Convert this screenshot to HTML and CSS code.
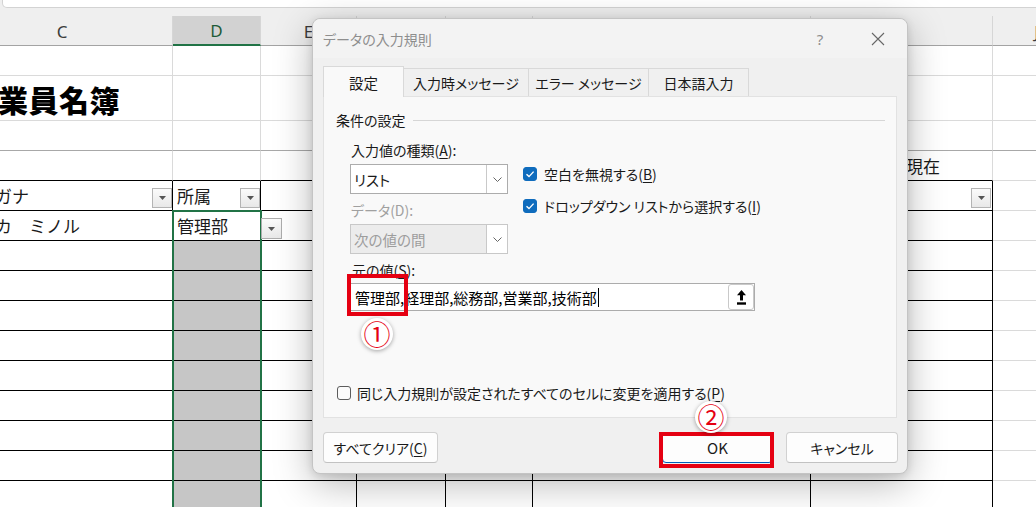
FILE: index.html
```html
<!DOCTYPE html>
<html lang="ja">
<head>
<meta charset="utf-8">
<title>データの入力規則</title>
<link rel="stylesheet" href="styles.css">
</head>
<body>
<div class="app">
  <div class="topstrip"><div class="formula"></div></div>
  <div class="sheet">
    <div class="ch chc">C</div><div class="ch sel">D</div><div class="ch">E</div><div class="ch">F</div><div class="ch">G</div><div class="ch">H</div><div class="ch">I</div><div class="ch chj">J</div>

    <div class="c"></div><div class="c"></div><div class="c"></div><div class="c"></div><div class="c"></div><div class="c"></div><div class="c"></div><div class="c"></div>

    <div class="c"><span class="title">業員名簿</span></div><div class="c"></div><div class="c"></div><div class="c"></div><div class="c"></div><div class="c"></div><div class="c"></div><div class="c"></div>

    <div class="c fz"></div><div class="c fz"></div><div class="c fz"></div><div class="c fz"></div><div class="c fz"></div><div class="c fz"></div><div class="c fz"></div><div class="c fz"></div>

    <div class="c tb"></div><div class="c tb"></div><div class="c tb"></div><div class="c tb"></div><div class="c tb"></div><div class="c tb"></div><div class="c tb date"><span>現在</span></div><div class="c"></div>

    <div class="c t hd"><span class="txt kana">フリガナ</span><span class="flt fc"><svg width="7" height="4" viewBox="0 0 7 4"><path d="M0 0H7L3.5 4Z" fill="#555"/></svg></span></div>
    <div class="c t hd"><span class="txt pad">所属</span><span class="flt fd"><svg width="7" height="4" viewBox="0 0 7 4"><path d="M0 0H7L3.5 4Z" fill="#555"/></svg></span></div>
    <div class="c t"></div><div class="c t"></div><div class="c t"></div><div class="c t"></div>
    <div class="c t hd end"><span class="flt fi"><svg width="7" height="4" viewBox="0 0 7 4"><path d="M0 0H7L3.5 4Z" fill="#555"/></svg></span></div>
    <div class="c"></div>

    <div class="c t"><span class="txt name">カ　ミノル</span></div><div class="c t"><span class="txt pad">管理部</span></div><div class="c t"></div><div class="c t"></div><div class="c t"></div><div class="c t"></div><div class="c t"></div><div class="c"></div>

    <div class="c t"></div><div class="c t g"></div><div class="c t"></div><div class="c t"></div><div class="c t"></div><div class="c t"></div><div class="c t"></div><div class="c"></div>
    <div class="c t"></div><div class="c t g"></div><div class="c t"></div><div class="c t"></div><div class="c t"></div><div class="c t"></div><div class="c t"></div><div class="c"></div>
    <div class="c t"></div><div class="c t g"></div><div class="c t"></div><div class="c t"></div><div class="c t"></div><div class="c t"></div><div class="c t"></div><div class="c"></div>
    <div class="c t"></div><div class="c t g"></div><div class="c t"></div><div class="c t"></div><div class="c t"></div><div class="c t"></div><div class="c t"></div><div class="c"></div>
    <div class="c t"></div><div class="c t g"></div><div class="c t"></div><div class="c t"></div><div class="c t"></div><div class="c t"></div><div class="c t"></div><div class="c"></div>
    <div class="c t"></div><div class="c t g"></div><div class="c t"></div><div class="c t"></div><div class="c t"></div><div class="c t"></div><div class="c t"></div><div class="c"></div>
    <div class="c t"></div><div class="c t g"></div><div class="c t"></div><div class="c t"></div><div class="c t"></div><div class="c t"></div><div class="c t"></div><div class="c"></div>
    <div class="c t"></div><div class="c t g"></div><div class="c t"></div><div class="c t"></div><div class="c t"></div><div class="c t"></div><div class="c t"></div><div class="c"></div>
    <div class="c t"></div><div class="c t g"></div><div class="c t"></div><div class="c t"></div><div class="c t"></div><div class="c t"></div><div class="c t"></div><div class="c"></div>
  </div>

  <div class="selection"></div>
  <div class="dvbtn"><svg width="7" height="4" viewBox="0 0 7 4"><path d="M0 0H7L3.5 4Z" fill="#555"/></svg></div>

  <div class="dialog">
    <div class="titlebar">
      <span class="dtitle">データの入力規則</span>
      <span class="help">?</span>
      <span class="close"><svg width="14" height="14" viewBox="0 0 14 14"><path d="M1 1L13 13M13 1L1 13" stroke="#666" stroke-width="1.1" fill="none"/></svg></span>
    </div>
    <div class="tabs">
      <div class="tab active w1">設定</div>
      <div class="tab w2">入力時メッセージ</div>
      <div class="tab w3">エラー メッセージ</div>
      <div class="tab w4">日本語入力</div>
    </div>
    <div class="panel">
      <div class="group"><span class="glabel">条件の設定</span><span class="gline"></span></div>
      <div class="cols">
        <div class="leftcol">
          <div class="lbl l1">入力値の種類(<u>A</u>):</div>
          <div class="combo"><span class="cv">リスト</span><span class="cbtn"><svg width="9" height="5" viewBox="0 0 9 5"><path d="M0.5 0.5L4.5 4.5L8.5 0.5" stroke="#666" stroke-width="1" fill="none"/></svg></span></div>
          <div class="lbl l2 dis">データ(D):</div>
          <div class="combo off"><span class="cv">次の値の間</span><span class="cbtn"><svg width="9" height="5" viewBox="0 0 9 5"><path d="M0.5 0.5L4.5 4.5L8.5 0.5" stroke="#666" stroke-width="1" fill="none"/></svg></span></div>
        </div>
        <div class="checks">
          <div class="chk c1"><span class="box on"><svg width="14" height="14" viewBox="0 0 14 14"><path d="M3.5 7.2L6 9.6L10.6 4.6" stroke="#fff" stroke-width="1.4" fill="none"/></svg></span><span>空白を無視する(<u>B</u>)</span></div>
          <div class="chk c2"><span class="box on"><svg width="14" height="14" viewBox="0 0 14 14"><path d="M3.5 7.2L6 9.6L10.6 4.6" stroke="#fff" stroke-width="1.4" fill="none"/></svg></span><span>ドロップダウン リストから選択する(<u>I</u>)</span></div>
        </div>
      </div>
      <div class="lbl l3">元の値(<u>S</u>):</div>
      <div class="srcinput">
        <span class="val">管理部,経理部,総務部,営業部,技術部</span><span class="caret"></span>
        <span class="collapse"><svg width="9" height="15" viewBox="0 0 9 15"><path d="M4.5 0L9 5.2H6V10.5H3V5.2H0Z" fill="#000"/><rect x="0" y="12.3" width="9" height="2.4" fill="#000"/></svg></span>
      </div>
      <div class="chk apply"><span class="box"></span><span>同じ入力規則が設定されたすべてのセルに変更を適用する(<u>P</u>)</span></div>
    </div>
    <div class="btnrow">
      <button class="btn clear">すべてクリア(<u>C</u>)</button>
      <button class="btn ok">OK</button>
      <button class="btn cancel">キャンセル</button>
    </div>
  </div>

  <div class="mark m1"></div>
  <div class="num n1">①</div>
  <div class="mark m2"></div>
  <div class="num n2">②</div>
</div>
</body>
</html>
```

FILE: styles.css
```css
* { box-sizing: border-box; }
html, body { margin: 0; padding: 0; }
body {
  width: 1036px;
  height: 507px;
  overflow: hidden;
  background: #fff;
  font-family: "Noto Sans CJK JP", "Noto Sans", sans-serif;
  color: #1a1a1a;
}
.app { position: relative; width: 1036px; height: 507px; overflow: hidden; }

/* top formula strip */
.topstrip { height: 16px; background: #efefef; padding-left: 2px; overflow: hidden; }
.formula {
  height: 8px;
  margin-right: -20px;
  background: #fff;
  border: 1px solid #d3d3d3;
  border-top: none;
  border-radius: 0 0 5px 5px;
}

/* sheet grid */
.sheet {
  display: grid;
  grid-template-columns: 173px 88px 96px 89px 87px 278px 182px 100px;
  grid-template-rows: 30px 30px 45px 30px 30px repeat(11, 30px);
}
.ch {
  background: #efefef;
  border-right: 1px solid #d6d6d6;
  border-bottom: 1px solid #a3a3a3;
  display: flex;
  align-items: center;
  justify-content: center;
  font-family: "Noto Sans", sans-serif;
  font-size: 17px;
  color: #3c3c3c;
  padding-top: 1px;
}
.ch.chc { padding-right: 48px; }
.ch.chj { padding-right: 12px; }
.ch.sel { background: #d2d2d2; border-bottom: 2px solid #217346; color: #1d5b37; }

.c {
  border-right: 1px solid #dadada;
  border-bottom: 1px solid #dadada;
  display: flex;
  align-items: center;
  font-size: 17px;
  white-space: nowrap;
  min-width: 0;
  color: #1a1a1a;
}
.c.fz { border-bottom-color: #a8a8a8; }
.c.tb { border-bottom-color: #000; }
.c.t { border-right-color: #000; border-bottom-color: #000; }
.c.g { background: #c6c6c6; }
.c.hd { justify-content: space-between; }
.c.end { justify-content: flex-end; }
.c.date { justify-content: flex-end; padding-right: 52px; }

.title { font-size: 30px; font-weight: 900; margin-left: -2px; color: #000; padding-top: 1px; letter-spacing: 0.5px; }
.txt.kana { margin-left: -39px; }
.txt.name { margin-left: -5px; }
.txt.pad { padding-left: 4px; }

.flt {
  width: 20px;
  height: 20px;
  border: 1px solid #b4b4b4;
  background: linear-gradient(#fbfbfb, #e8e8e8);
  display: flex;
  align-items: center;
  justify-content: center;
  margin-top: 4px;
  padding-top: 1px;
}
.flt.fi { margin-right: 1px; }

/* overlays on sheet */
.selection {
  position: absolute;
  left: 172px;
  top: 210px;
  width: 90px;
  height: 310px;
  border: 2px solid #217346;
  pointer-events: none;
}
.dvbtn {
  position: absolute;
  left: 261px;
  top: 218px;
  width: 21px;
  height: 21px;
  border: 1px solid #adadad;
  background: linear-gradient(#fbfbfb, #e8e8e8);
  display: flex;
  align-items: center;
  justify-content: center;
  padding-top: 1px;
}

/* dialog */
.dialog {
  position: absolute;
  left: 312px;
  top: 18px;
  width: 596px;
  height: 456px;
  background: #f0f0f0;
  border: 1px solid #c4c4c4;
  border-radius: 8px;
  box-shadow: 0 10px 38px rgba(0, 0, 0, 0.28), 0 2px 8px rgba(0, 0, 0, 0.12);
  font-feature-settings: "palt" 1;
  font-size: 14px;
  display: flex;
  flex-direction: column;
}
.titlebar {
  height: 39px;
  display: flex;
  align-items: center;
  padding-left: 10px;
  padding-right: 6px;
  background: #f3f3f3;
  border-radius: 8px 8px 0 0;
}
.dtitle { color: #8e8e8e; font-size: 14px; flex: 1; }
.help {
  width: 46px;
  text-align: center;
  color: #8e8e8e;
  font-family: "Noto Sans", sans-serif;
  font-size: 15px;
  margin-right: 12px;
}
.close { width: 46px; display: flex; justify-content: center; align-items: center; }

.tabs {
  height: 38px;
  display: flex;
  align-items: flex-end;
  padding-left: 10px;
}
.tab {
  height: 28px;
  border-top: 1px solid #d9d9d9;
  border-right: 1px solid #d9d9d9;
  background: #f0f0f0;
  display: flex;
  align-items: center;
  justify-content: center;
  color: #1a1a1a;
  font-size: 14px;
  padding-top: 1px;
}
.tab.active {
  height: 31px;
  margin-bottom: -1px;
  background: #f9f9f9;
  border-left: 1px solid #d9d9d9;
  position: relative;
  z-index: 1;
  padding-top: 0;
  font-size: 14.5px;
}
.w1 { width: 81px; }
.w2 { width: 125px; }
.w3 { width: 120px; }
.w4 { width: 100px; }

.panel {
  margin: 0 10px 0 10px;
  height: 322px;
  background: #f9f9f9;
  border: 1px solid #e2e2e2;
  display: flex;
  flex-direction: column;
}
.group {
  margin-top: 13px;
  height: 20px;
  display: flex;
  align-items: center;
  padding-left: 12px;
  padding-right: 11px;
}
.glabel { font-size: 14px; }
.gline { flex: 1; height: 1px; background: #d6d6d6; margin-left: 7px; }

.cols { display: flex; }
.leftcol { padding-left: 26px; width: 184px; }
.lbl { height: 20px; display: flex; align-items: center; padding-left: 1px; font-size: 14px; }
.lbl u, .chk u, .btn u { text-underline-offset: 2px; }
.lbl.l1 { margin-top: 10px; }
.lbl.l2 { margin-top: 6px; }
.lbl.dis { color: #a0a0a0; }
.combo {
  margin-top: 4px;
  width: 158px;
  height: 30px;
  border: 1px solid #acacac;
  background: #fff;
  display: flex;
}
.cv { flex: 1; display: flex; align-items: center; padding-left: 3px; font-size: 14.5px; }
.cbtn {
  width: 21px;
  border-left: 1px solid #c9c9c9;
  display: flex;
  align-items: center;
  justify-content: center;
  background: #fff;
}
.combo.off { border-color: #c8c8c8; }
.combo.off .cv { background: #ececec; color: #9d9d9d; }

.checks { margin-left: 15px; }
.chk { display: flex; align-items: center; height: 20px; gap: 7px; font-size: 14px; }
.chk.c1 { margin-top: 34px; }
.chk.c2 { margin-top: 12px; }
.box {
  width: 14px;
  height: 14px;
  border-radius: 3px;
  border: 1px solid #5c5c5c;
  background: #fbfbfb;
  flex: none;
  display: flex;
  margin-top: -1px;
}
.box.on { background: #0f6cbd; border-color: #0f6cbd; }
.box.on svg { margin: -1px; }

.lbl.l3 { margin-top: 6px; padding-left: 28px; }
.srcinput {
  margin-top: 3px;
  margin-left: 24px;
  width: 407px;
  height: 28px;
  border: 1px solid #acacac;
  background: #fff;
  display: flex;
  align-items: center;
  padding-left: 6px;
}
.val { font-size: 15px; color: #000; }
.caret { width: 1px; height: 19px; background: #000; margin-left: 1px; }
.collapse {
  margin-left: auto;
  width: 26px;
  height: 26px;
  border: 1px solid #c9c9c9;
  border-radius: 3px;
  background: #fff;
  display: flex;
  align-items: center;
  justify-content: center;
}
.chk.apply { margin-top: 72px; margin-left: 13px; gap: 6px; }

.btnrow {
  display: flex;
  padding: 14px 9px 0 10px;
}
.btn {
  height: 31px;
  background: #fdfdfd;
  border: 1px solid #d1d1d1;
  border-bottom-color: #c2c2c2;
  border-radius: 4px;
  font-family: "Noto Sans CJK JP", "Noto Sans", sans-serif;
  font-feature-settings: "palt" 1;
  font-size: 14px;
  color: #1a1a1a;
  padding: 0;
  display: flex;
  align-items: center;
  justify-content: center;
}
.btn.clear { width: 115px; }
.btn.ok { width: 111px; margin-left: auto; border-color: #005fb8; font-size: 15px; }
.btn.cancel { width: 112px; margin-left: 13px; }

/* annotations */
.mark { position: absolute; border: 4px solid #e50012; }
.m1 { left: 347px; top: 274px; width: 61px; height: 42px; }
.m2 { left: 659px; top: 432px; width: 115px; height: 36px; }
.num {
  position: absolute;
  width: 32px;
  height: 32px;
  border-radius: 50%;
  background: #fff;
  box-shadow: 0 1px 4px rgba(0, 0, 0, 0.35);
  color: #e50012;
  font-size: 27px;
  font-weight: 400;
  line-height: 32px;
  text-align: center;
  font-family: "Noto Sans CJK JP", sans-serif;
}
.n1 { left: 361px; top: 318px; }
.n2 { left: 695px; top: 401px; }
```
